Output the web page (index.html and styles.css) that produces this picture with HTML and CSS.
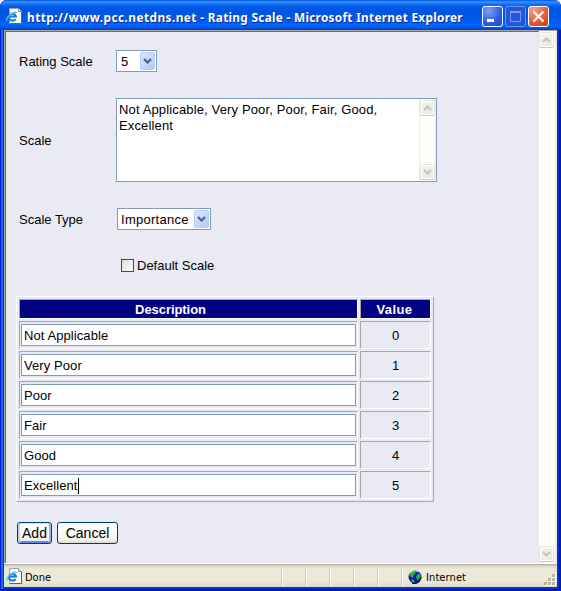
FILE: index.html
```html
<!DOCTYPE html>
<html lang="en">
<head>
<meta charset="utf-8">
<title>Rating Scale</title>
<link rel="stylesheet" href="styles.css">
</head>
<body>
<svg class="defs" width="0" height="0">
  <symbol id="page" viewBox="0 0 16 16">
    <path d="M3.5.5h9l3 3v12h-12z" fill="#fffef2" stroke="#9a9cb8"/>
    <path d="M12.5.5v3h3" fill="#ddd" stroke="#8b8b9a"/>
    <path d="M4 15.5h11.5V4" fill="none" stroke="#535a98"/>
    <path d="M9.6 10.9A3.5 3.5 0 1 1 10 8.6H4" fill="none" stroke="#147bd1" stroke-width="2"/>
    <path d="M1 13C-1 10 7 3 11 4.5" fill="none" stroke="#55bdf3" stroke-width="1.3"/>
  </symbol>
  <symbol id="down" viewBox="0 0 9 6"><path d="M1 1l3.5 3.5L8 1" fill="none" stroke="currentColor" stroke-width="2.2"/></symbol>
  <symbol id="up" viewBox="0 0 9 6"><path d="M1 5l3.5-3.5L8 5" fill="none" stroke="currentColor" stroke-width="2.2"/></symbol>
</svg>
<div class="window">
  <header class="titlebar">
    <svg class="page-icon" width="16" height="16"><use href="#page"/></svg>
    <h1 class="title"><span class="address">http://www.pcc.netdns.net</span> - Rating Scale - Microsoft Internet Explorer</h1>
    <div class="controls">
      <span class="control"><svg width="19" height="19"><path d="M4 12h7v3H4z" fill="#fff"/></svg></span>
      <span class="control disabled"><svg width="19" height="19"><path d="M4.5 4.5h10v10h-10z" fill="none" stroke="#7a9cf0"/><path d="M4 5h11" stroke="#7a9cf0" stroke-width="2"/></svg></span>
      <span class="control close"><svg width="19" height="19"><path d="M4.5 4.5l10 10M14.5 4.5l-10 10" stroke="#fff" stroke-width="2.2"/></svg></span>
    </div>
  </header>
  <main class="view">
    <form class="form">
      <div class="row rating"><span class="label">Rating Scale</span><div class="select"><span class="choice">5</span><i class="drop"><svg width="9" height="6"><use href="#down"/></svg></i></div></div>
      <div class="row scale"><span class="label">Scale</span>
        <div class="textarea"><p class="words">Not Applicable, Very Poor, Poor, Fair, Good,<br>Excellent</p>
          <div class="bar inner"><i class="scroll"><svg width="9" height="6"><use href="#up"/></svg></i><i class="scroll"><svg width="9" height="6"><use href="#down"/></svg></i></div>
        </div>
      </div>
      <div class="row type"><span class="label">Scale Type</span><div class="select wide"><span class="choice">Importance</span><i class="drop"><svg width="9" height="6"><use href="#down"/></svg></i></div></div>
      <div class="row default"><i class="check"></i><span class="option">Default Scale</span></div>
      <table class="ratings">
        <thead><tr><th class="desc">Description</th><th class="val">Value</th></tr></thead>
        <tbody>
          <tr><td><div class="field">Not Applicable</div></td><td class="num">0</td></tr>
          <tr><td><div class="field">Very Poor</div></td><td class="num">1</td></tr>
          <tr><td><div class="field">Poor</div></td><td class="num">2</td></tr>
          <tr><td><div class="field">Fair</div></td><td class="num">3</td></tr>
          <tr><td><div class="field">Good</div></td><td class="num">4</td></tr>
          <tr><td><div class="field">Excellent<i class="caret"></i></div></td><td class="num">5</td></tr>
        </tbody>
      </table>
      <div class="buttons"><span class="button primary">Add</span><span class="button cancel">Cancel</span></div>
    </form>
    <div class="bar"><i class="scroll"><svg width="9" height="6"><use href="#up"/></svg></i><i class="scroll"><svg width="9" height="6"><use href="#down"/></svg></i></div>
  </main>
  <footer class="status">
    <svg class="status-icon" width="16" height="16"><use href="#page"/></svg>
    <span class="done">Done</span>
    <i class="pane"></i><i class="pane"></i><i class="pane"></i><i class="pane"></i><i class="pane"></i>
    <div class="zone">
      <svg width="14" height="14" viewBox="0 0 14 14"><circle cx="7" cy="7" r="6.5" fill="#0b13b8"/><path d="M1 5l2-3 3-1 2 2-2 2-1 3-2-1zM8 6l3-3 2 3-1 3-3 1zM3 9l3 1 1 3-3-1z" fill="#25b52c"/><path d="M2 3q4-4 8-1" fill="none" stroke="#b5bdc0" stroke-width="1.3"/><path d="M4 13q7 2 9-6" fill="none" stroke="#062040" stroke-width="1.4"/></svg>
      <span class="zone-name">Internet</span>
    </div>
    <svg class="grip" width="12" height="12"><g fill="#fff"><path d="M9 1h3v3H9zM5 5h3v3H5zM9 5h3v3H9zM1 9h3v3H1zM5 9h3v3H5zM9 9h3v3H9z"/></g><path d="M8 0h3v3H8zM4 4h3v3H4zM8 4h3v3H8zM0 8h3v3H0zM4 8h3v3H4zM8 8h3v3H8z" fill="#b9b6a4"/></svg>
  </footer>
</div>
</body>
</html>
```

FILE: styles.css
```css
* { box-sizing: border-box; }
body { margin: 0; background: #fff; color: #000; font: 13px/16px "Liberation Sans", Arial, sans-serif; }
svg { display: block; flex: none; }
i { display: block; flex: none; }
.defs { display: none; }
.window { width: 561px; height: 591px; display: flex; flex-direction: column; padding: 0 4px 4px; border-radius: 7px 7px 0 0; background: #0831d9; box-shadow: inset 1px 0 #0019cf, inset -2px -2px #001ea0, inset 3px 0 #166aee; overflow: hidden; white-space: nowrap; }
.titlebar { height: 30px; flex: none; display: flex; margin: 0 -4px; padding: 0 6px; background: linear-gradient(#0058e6 0, #3a93ff 2px, #1673f4 4px, #0058e6 7px, #0055e2 14px, #005df2 21px, #0066ff 26px, #0054e0 28px, #003dc4 30px); }
.page-icon { margin: 8px 0 0; }
.title { margin: 8px 0 0 5px; width: 445px; font: bold 13px/18px "Noto Sans", sans-serif; letter-spacing: .31px; color: #fff; text-shadow: 1px 1px #0b2a8a; transform: scaleX(.91); transform-origin: 0 0; }
.address { letter-spacing: .48px; }
.controls { display: flex; gap: 2px; margin: 6px 0 0 10px; }
.control { width: 21px; height: 21px; border: 1px solid #fff; border-radius: 3px; background: radial-gradient(circle at 30% 20%, #7c9ff5, #2a5be6 60%, #1c4bd8); }
.disabled { background: #2356d9; border-color: #7197ed; }
.close { background: radial-gradient(circle at 25% 15%, #f3a38b, #e35a35 60%, #cb3d16); }
.view { height: 533px; flex: none; display: flex; border-top: 1px solid #aca899; border-left: 1px solid #aca899; background: #eaeaf4; box-shadow: inset 1px 1px #716f64; border-right: 1px solid #ece9d8; }
.form { width: 534px; flex: none; height: 532px; padding: 19px 0 0 11px; }
.row { display: flex; align-items: center; padding-left: 3px; }
.label { width: 97px; padding-top: 2px; }
.rating { height: 22px; }
.scale { height: 84px; margin-top: 26px; }
.type { height: 22px; margin-top: 26px; }
.type .label { width: 98px; }
.default { height: 14px; margin-top: 28px; padding-left: 105px; gap: 3px; }
.option { padding-top: 2px; }
.select { width: 41px; height: 22px; display: flex; align-items: center; justify-content: space-between; padding: 0 1px 0 4px; border: 1px solid #7f9db9; background: #fff; }
.choice { padding-top: 2px; }
.wide { width: 94px; padding-left: 3px; letter-spacing: .27px; }
.drop { width: 15px; height: 18px; display: flex; align-items: center; justify-content: center; border: 1px solid #b7ccfb; border-radius: 2px; background: linear-gradient(135deg, #dbe6ff, #b3c9fa); color: #4d6185; }
.textarea { width: 321px; height: 84px; display: flex; justify-content: space-between; border: 1px solid #7f9db9; background: #fff; letter-spacing: .14px; }
.words { margin: 3px 0 0 2px; }
.bar { width: 17px; flex: none; display: flex; flex-direction: column; justify-content: space-between; padding: 1px 1px 1px 0; border-right: 1px solid #eeede5; background: #fefefa; }
.inner { border-left: 1px solid #eeede5; }
.scroll { width: 15px; height: 16px; display: flex; align-items: center; justify-content: center; border: 1px solid #e5e4d8; border-bottom: 1px solid #c9c8bb; border-radius: 2px; background: linear-gradient(135deg, #f6f6f2, #e8e7df); color: #c6c5bb; box-shadow: inset 0 0 0 1px #fff; }
.check { width: 13px; height: 13px; border: 1px solid #1c5180; background: linear-gradient(135deg, #dcdcd7, #fff); }
.ratings { width: 418px; table-layout: fixed; margin-top: 24px; border: 1px solid; border-color: #fff #aca899 #aca899 #fff; border-collapse: separate; border-spacing: 2px; }
.ratings th, .ratings td { padding: 1px; border: 1px solid; border-color: #aca899 #fff #fff #aca899; }
.ratings th { height: 20px; padding: 2px 0 0; background: navy; background-clip: padding-box; color: #fff; line-height: 16px; }
.ratings td { height: 28px; }
.ratings .desc { width: 339px; padding-right: 36px; letter-spacing: -.06px; }
.ratings .val { padding-right: 2px; letter-spacing: .4px; }
.ratings .num { padding-top: 2px; text-align: center; }
.field { height: 22px; display: flex; align-items: center; width: 335px; padding: 2px 0 0 2px; border: 1px solid #7f9db9; background: #fff; letter-spacing: .08px; }
.caret { width: 1px; height: 16px; margin-left: 1px; background: #000; }
.buttons { display: flex; gap: 5px; margin: 20px 0 0 1px; }
.button { width: 35px; height: 22px; display: flex; align-items: center; justify-content: center; border: 1px solid #003c74; border-radius: 3px; background: linear-gradient(#fff, #f4f3ee 85%, #d9d5c9); font-size: 14px; }
.primary { box-shadow: inset 0 1px #cee7ff, inset 2px 0 #bcd4f6, inset -2px 0 #98b8ea, inset 0 -2px #6982ee; }
.cancel { width: 61px; }
.status { height: 24px; display: flex; align-items: center; padding: 3px 0 0 2px; border-top: 1px solid #fff; background: linear-gradient(#aca899 0, #dcd9c8 2px, #ece9d8 5px, #ece9d8 17px, #dfdbc4); font: 11px/14px "DejaVu Sans Condensed", "DejaVu Sans", sans-serif; }
.status-icon { margin-top: -2px; }
.done { width: 259px; padding: 1px 0 0 3px; }
.pane { width: 24px; height: 17px; border-left: 1px solid #c9c6b5; box-shadow: inset 1px 0 #fff; }
.zone { display: flex; align-items: center; gap: 4px; height: 17px; border-left: 1px solid #c9c6b5; padding-left: 6px; box-shadow: inset 1px 0 #fff; flex: 1; }
.zone-name { padding-top: 1px; letter-spacing: .1px; }
.grip { align-self: flex-end; margin: 0 1px 1px 0; }
```
